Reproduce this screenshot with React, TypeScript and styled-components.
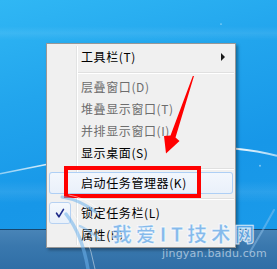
import React from 'react';
import styled, { createGlobalStyle, css } from 'styled-components';

const Global = createGlobalStyle`
  html, body { margin: 0; padding: 0; overflow: hidden; background: #1a9be9; }
  #root { width: 277px; height: 269px; }
`;

const Desktop = styled.div`
  position: relative;
  width: 277px;
  height: 269px;
  overflow: hidden;
  display: flex;
  flex-direction: column;
  font-family: "Noto Sans CJK SC", "Microsoft YaHei", sans-serif;
`;

const Wallpaper = styled.div`
  flex: 1;
  background: linear-gradient(165deg, #30b7f4 0%, #22a5ed 35%, #1797e8 70%, #1a9ae9 100%);
  svg { display: block; width: 100%; height: 100%; }
`;

const Taskbar = styled.div`
  height: 40px;
  box-sizing: border-box;
  border-top: 1px solid #17466e;
  background: linear-gradient(180deg, #4884b7 0%, #3a78ae 40%, #2f6ea6 100%);
`;

const Menu = styled.div`
  position: absolute;
  left: 46px;
  top: 43px;
  width: 190px;
  box-sizing: border-box;
  padding: 2px 2px 1px;
  background: #f0f0f0;
  border: 1px solid #979797;
  box-shadow: 2px 2px 3px rgba(0, 0, 0, 0.35);
  display: flex;
  flex-direction: column;
  &::before {
    content: '';
    position: absolute;
    left: 29px;
    top: 2px;
    bottom: 2px;
    width: 1px;
    background: #e2e3e3;
    box-shadow: 1px 0 0 #ffffff;
  }
`;

const Item = styled.div<{ $hot?: boolean }>`
  position: relative;
  z-index: 1;
  height: 22px;
  display: flex;
  align-items: center;
  padding-right: 8px;
  border-radius: 3px;
  ${p => p.$hot && css`
    background: linear-gradient(180deg, #f3f7fd 0%, #e9f0fa 100%);
    box-shadow: inset 0 0 0 1px #aecff5;
  `}
`;

const IconCell = styled.div<{ $checked?: boolean }>`
  width: 22px;
  height: 22px;
  flex: none;
  box-sizing: border-box;
  display: flex;
  align-items: center;
  justify-content: center;
  border-radius: 3px;
  ${p => p.$checked && css`
    border: 1px solid #b6d1f2;
    background: linear-gradient(180deg, #f4f8fd 0%, #e8f0fa 100%);
  `}
`;

const Label = styled.span<{ $disabled?: boolean }>`
  margin-left: 10px;
  font-size: 12px;
  letter-spacing: 0.6px;
  line-height: 22px;
  white-space: nowrap;
  color: ${p => (p.$disabled ? '#6d6d6d' : '#000000')};
`;

const SubArrow = styled.span`
  margin-left: auto;
  width: 0;
  height: 0;
  border-left: 4px solid #1a1a1a;
  border-top: 4px solid transparent;
  border-bottom: 4px solid transparent;
`;

const Separator = styled.div`
  height: 8px;
  margin-left: 27px;
  margin-right: -1px;
  &::after {
    content: '';
    display: block;
    margin-top: 4px;
    height: 1px;
    background: #e0e0e0;
    box-shadow: 0 1px 0 #ffffff;
  }
`;

const RedBox = styled.div`
  position: absolute;
  left: 64px;
  top: 166px;
  width: 137px;
  height: 32px;
  box-sizing: border-box;
  border: 4px solid #ff0000;
  z-index: 5;
`;

const Overlay = styled.svg`
  position: absolute;
  left: 0;
  top: 0;
  width: 277px;
  height: 269px;
  pointer-events: none;
  z-index: 6;
`;

const WatermarkTitle = styled.div`
  position: absolute;
  left: 112px;
  top: 223px;
  z-index: 7;
  font-family: "Noto Sans CJK SC", sans-serif;
  font-size: 20px;
  font-weight: 900;
  letter-spacing: 3.8px;
  line-height: 21px;
  color: rgba(105, 172, 234, 0.8);
  -webkit-text-stroke: 1px rgba(255, 255, 255, 0.75);
  white-space: nowrap;
`;

const WatermarkUrl = styled.div`
  position: absolute;
  left: 162px;
  top: 248px;
  z-index: 7;
  font-family: "DejaVu Sans", "Liberation Sans", sans-serif;
  font-size: 11px;
  letter-spacing: 0.2px;
  line-height: 12px;
  color: rgba(235, 242, 250, 0.6);
  white-space: nowrap;
`;

type Entry =
  | { kind: 'sep' }
  | { kind: 'item'; label: string; disabled?: boolean; submenu?: boolean; checked?: boolean; hot?: boolean };

const entries: Entry[] = [
  { kind: 'item', label: '工具栏(T)', submenu: true },
  { kind: 'sep' },
  { kind: 'item', label: '层叠窗口(D)', disabled: true },
  { kind: 'item', label: '堆叠显示窗口(T)', disabled: true },
  { kind: 'item', label: '并排显示窗口(I)', disabled: true },
  { kind: 'item', label: '显示桌面(S)' },
  { kind: 'sep' },
  { kind: 'item', label: '启动任务管理器(K)', hot: true },
  { kind: 'sep' },
  { kind: 'item', label: '锁定任务栏(L)', checked: true },
  { kind: 'item', label: '属性(R)' },
];

const Check = () => (
  <svg width="22" height="22" viewBox="0 0 22 22">
    <path d="M7.2 11.2 L9.8 15.2 L14.8 7" fill="none" stroke="#1f2c8a" strokeWidth="1.8" strokeLinejoin="round" strokeLinecap="round" />
  </svg>
);

export default function App() {
  return (
    <>
      <Global />
      <Desktop>
        <Wallpaper>
          <svg viewBox="0 0 277 228" preserveAspectRatio="none">
            <defs>
              <linearGradient id="streakL" x1="0" x2="1" y1="0" y2="0">
                <stop offset="0" stopColor="#ffffff" stopOpacity="0.5" />
                <stop offset="1" stopColor="#ffffff" stopOpacity="0.85" />
              </linearGradient>
              <linearGradient id="streakR" x1="0" x2="1" y1="0" y2="0">
                <stop offset="0" stopColor="#ffffff" stopOpacity="0.95" />
                <stop offset="1" stopColor="#ffffff" stopOpacity="0.6" />
              </linearGradient>
              <linearGradient id="band" x1="0" x2="0" y1="0" y2="1">
                <stop offset="0" stopColor="#ffffff" stopOpacity="0" />
                <stop offset="0.5" stopColor="#ffffff" stopOpacity="0.08" />
                <stop offset="1" stopColor="#ffffff" stopOpacity="0" />
              </linearGradient>
            </defs>
            <rect x="0" y="26" width="277" height="14" fill="url(#band)" />
            <rect x="0" y="180" width="277" height="22" fill="url(#band)" />
            <path d="M0 173 Q 25 168 50 163" fill="none" stroke="url(#streakL)" strokeWidth="1.6" />
            <path d="M236 148 Q 258 150 277 155" fill="none" stroke="url(#streakR)" strokeWidth="2" />
            <circle cx="260" cy="165" r="0.9" fill="#ffffff" opacity="0.5" />
            <circle cx="221" cy="24" r="0.9" fill="#ffffff" opacity="0.4" />
          </svg>
        </Wallpaper>
        <Taskbar />

        <Menu>
          {entries.map((e, i) =>
            e.kind === 'sep' ? (
              <Separator key={i} />
            ) : (
              <Item key={i} $hot={e.hot}>
                <IconCell $checked={e.checked}>{e.checked && <Check />}</IconCell>
                <Label $disabled={e.disabled}>{e.label}</Label>
                {e.submenu && <SubArrow />}
              </Item>
            )
          )}
        </Menu>

        <RedBox />

        <Overlay viewBox="0 0 277 269">
          <g fill="none" strokeLinecap="round">
            <path d="M62 197 Q 80 200 96 212" stroke="rgba(110,178,236,0.55)" strokeWidth="3" />
            <path d="M69 195 Q 86 198 97 208" stroke="rgba(255,255,255,0.5)" strokeWidth="1" />
            <path d="M66 214 Q 82 234 88 269" stroke="rgba(110,178,236,0.55)" strokeWidth="3.5" />
            <path d="M72 212 Q 88 232 95 269" stroke="rgba(255,255,255,0.45)" strokeWidth="1" />
            <path d="M80 226 Q 92 232 100 240" stroke="rgba(110,178,236,0.5)" strokeWidth="2.5" />
            <path d="M250 252 Q 262 232 274 210" stroke="rgba(150,200,240,0.45)" strokeWidth="2" />
          </g>
          <polygon
            points="194,76 175.5,137.5 179.5,141 166,153.5 164,136 170.5,135.5 192.8,76"
            fill="#ff0000"
          />
        </Overlay>

        <WatermarkTitle>我爱IT技术网</WatermarkTitle>
        <WatermarkUrl>jingyan.baidu.com</WatermarkUrl>
      </Desktop>
    </>
  );
}
